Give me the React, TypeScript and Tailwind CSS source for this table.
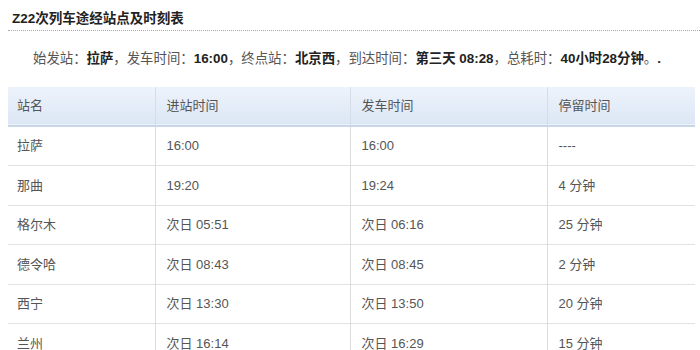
const stations = [
  { name: '拉萨', arrive: '16:00', depart: '16:00', stay: '----' },
  { name: '那曲', arrive: '19:20', depart: '19:24', stay: '4 分钟' },
  { name: '格尔木', arrive: '次日 05:51', depart: '次日 06:16', stay: '25 分钟' },
  { name: '德令哈', arrive: '次日 08:43', depart: '次日 08:45', stay: '2 分钟' },
  { name: '西宁', arrive: '次日 13:30', depart: '次日 13:50', stay: '20 分钟' },
  { name: '兰州', arrive: '次日 16:14', depart: '次日 16:29', stay: '15 分钟' },
];

const font = { fontFamily: '"Liberation Sans", Arial, "Noto Sans CJK SC", sans-serif' };

export default function App() {
  return (
    <div className="w-[700px] h-[350px] overflow-hidden bg-white text-[#444]" style={font}>
      {/* Title */}
      <div className="pl-[12px] pt-[11px]">
        <h2 className="text-[13.5px] font-bold text-[#222] leading-[16px]">Z22次列车途经站点及时刻表</h2>
      </div>
      <div className="ml-[8px] mt-[3px] border-b border-dotted border-[#aaa]"></div>

      {/* Summary */}
      <p className="pl-[33px] mt-[20px] text-[13.4px] leading-[16px] text-[#555]">
        始发站：<b className="text-[#222]">拉萨</b>，发车时间：<b className="text-[#222]">16:00</b>，终点站：
        <b className="text-[#222]">北京西</b>，到达时间：<b className="text-[#222]">第三天 08:28</b>，总耗时：
        <b className="text-[#222]">40小时28分钟</b>。<b className="text-[#222]">.</b>
      </p>

      {/* Table */}
      <table className="ml-[8px] mt-[20px] w-[687px] border-collapse text-[13px] text-[#555]">
        <thead>
          <tr className="h-[39px] bg-gradient-to-b from-[#edf3fb] to-[#dce7f5] border-b-2 border-[#c9d6e8]">
            <th className="w-[147px] text-left font-normal pl-[9px] border-r border-[#d6dde6]">站名</th>
            <th className="w-[195px] text-left font-normal pl-[11px] border-r border-[#d6dde6]">进站时间</th>
            <th className="w-[197px] text-left font-normal pl-[11px] border-r border-[#d6dde6]">发车时间</th>
            <th className="text-left font-normal pl-[11px]">停留时间</th>
          </tr>
        </thead>
        <tbody>
          {stations.map((s) => (
            <tr key={s.name} className="h-[39.5px] border-b border-[#e2e2e2]">
              <td className="pl-[9px] border-r border-[#dcdcdc]">{s.name}</td>
              <td className="pl-[11px] border-r border-[#dcdcdc]">{s.arrive}</td>
              <td className="pl-[11px] border-r border-[#dcdcdc]">{s.depart}</td>
              <td className="pl-[11px]">{s.stay}</td>
            </tr>
          ))}
        </tbody>
      </table>
    </div>
  );
}
